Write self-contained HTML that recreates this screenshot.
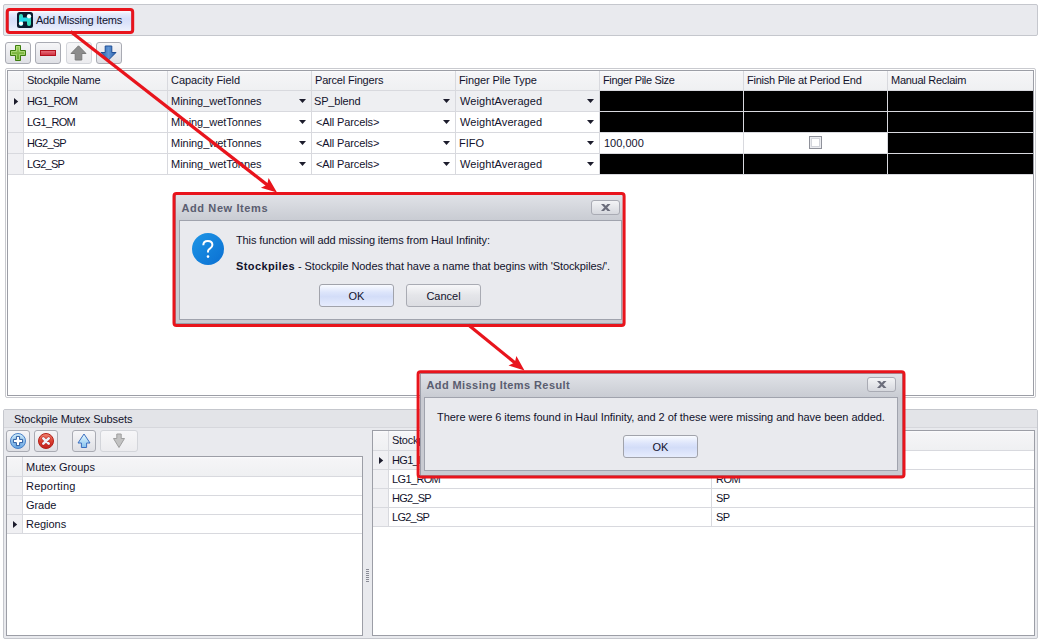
<!DOCTYPE html>
<html><head><meta charset="utf-8">
<style>
html,body{margin:0;padding:0;}
body{width:1041px;height:642px;overflow:hidden;position:relative;background:#fff;font-family:"Liberation Sans",sans-serif;font-size:11px;color:#12122c;}
div{position:absolute;box-sizing:border-box;}
.t{white-space:nowrap;line-height:12px;}
svg{position:absolute;overflow:visible;}
</style></head><body>

<div style="left:3px;top:4px;width:1035px;height:32px;border:1px solid #c5c7cd;border-radius:2px;background:#e9eaee;"></div>
<div style="left:8px;top:10px;width:124px;height:22px;border:1px solid #a6b0cf;border-radius:2px;background:linear-gradient(#fdfdff 0%,#e6ebfc 14%,#d6def9 40%,#dde4fa 65%,#eef1fd 100%);"></div>
<svg style="left:17px;top:12px" width="16" height="16" viewBox="0 0 16 16">
<rect x="0" y="0" width="16" height="16" rx="2.5" fill="#0b1a2e"/>
<defs><linearGradient id="hg" gradientUnits="userSpaceOnUse" x1="2" y1="2" x2="14" y2="14"><stop offset="0" stop-color="#3ee4a4"/><stop offset="0.4" stop-color="#22d6f0"/><stop offset="1" stop-color="#3ee4a8"/></linearGradient></defs>
<rect x="2" y="2" width="4" height="12" rx="2" fill="url(#hg)"/>
<rect x="10" y="2" width="4" height="12" rx="2" fill="url(#hg)"/>
<rect x="2" y="5.5" width="12" height="4" fill="url(#hg)"/>
<circle cx="4" cy="11.5" r="2.1" fill="#fff"/>
<circle cx="12" cy="4.3" r="2.1" fill="#fff"/>
</svg>
<div class="t" style="left:36px;top:14px;letter-spacing:-0.225px;">Add Missing Items</div>
<div style="left:5px;top:42px;width:26px;height:22px;border:1px solid #a9abb3;border-radius:3px;background:linear-gradient(#f6f6f8,#dfe0e5);"></div>
<div style="left:35px;top:42px;width:26px;height:22px;border:1px solid #a9abb3;border-radius:3px;background:linear-gradient(#f6f6f8,#dfe0e5);"></div>
<div style="left:66px;top:42px;width:26px;height:22px;border:1px solid #d3d5da;border-radius:3px;background:linear-gradient(#f6f6f8,#ececef);"></div>
<div style="left:96px;top:42px;width:26px;height:22px;border:1px solid #a9abb3;border-radius:3px;background:linear-gradient(#f6f6f8,#dfe0e5);"></div>
<svg style="left:10px;top:45px" width="16" height="16" viewBox="0 0 16 16">
<defs><linearGradient id="gp" x1="0" y1="0" x2="0" y2="1"><stop offset="0" stop-color="#a2d464"/><stop offset="1" stop-color="#5c9c22"/></linearGradient></defs>
<path d="M5.5 0.5h5v5h5v5h-5v5h-5v-5h-5v-5h5z" fill="url(#gp)" stroke="#3d7c0e" stroke-width="1"/>
<path d="M6.5 1.5h3v5h5v3h-5v5h-3v-5h-5v-3h5z" fill="none" stroke="#c8ec98" stroke-width="0.8" opacity="0.7"/>
</svg>
<svg style="left:40px;top:50px" width="16" height="6" viewBox="0 0 16 6">
<defs><linearGradient id="gm" x1="0" y1="0" x2="0" y2="1"><stop offset="0" stop-color="#ea7580"/><stop offset="1" stop-color="#cc2a3a"/></linearGradient></defs>
<rect x="0.5" y="0.5" width="15" height="5" fill="url(#gm)" stroke="#b2101c" stroke-width="1"/>
</svg>
<svg style="left:70px;top:45px" width="17" height="16" viewBox="0 0 17 16">
<path d="M8.5 0.8 L16 8.5 H11.8 V15 H5.2 V8.5 H1 Z" fill="#8c8c8c" stroke="#7a7a7a" stroke-width="1"/>
</svg>
<svg style="left:100px;top:45px" width="17" height="16" viewBox="0 0 17 16">
<defs><linearGradient id="gd" x1="0" y1="0" x2="1" y2="0"><stop offset="0" stop-color="#2a5ea8"/><stop offset="0.5" stop-color="#5f95d6"/><stop offset="1" stop-color="#2a5ea8"/></linearGradient></defs>
<path d="M5.2 1 H11.8 V7.5 H16 L8.5 15 L1 7.5 H5.2 Z" fill="url(#gd)" stroke="#1f4f96" stroke-width="1"/>
</svg>
<div style="left:5px;top:68px;width:1031px;height:330px;border:1px solid #c9cacf;border-radius:2px;background:#fff;"></div>
<div style="left:7px;top:70px;width:1027px;height:326px;border:1px solid #9c9ea6;background:#fff;"></div>
<div style="left:8px;top:71px;width:1025px;height:19px;background:linear-gradient(#fcfcfd 0px,#f5f5f7 2px,#eff0f2 19px);"></div>
<div style="left:8px;top:90px;width:1025px;height:1px;background:#d8d9de;"></div>
<div style="left:8px;top:91px;width:15px;height:84px;background:#f0f0f3;"></div>
<div style="left:24px;top:91px;width:1009px;height:20px;background:#eeeff2;"></div>
<div style="left:8px;top:111px;width:1025px;height:1px;background:#d8d9de;"></div>
<div style="left:8px;top:132px;width:1025px;height:1px;background:#d8d9de;"></div>
<div style="left:8px;top:153px;width:1025px;height:1px;background:#d8d9de;"></div>
<div style="left:8px;top:174px;width:1025px;height:1px;background:#d8d9de;"></div>
<div style="left:23px;top:71px;width:1px;height:104px;background:#d8d9de;"></div>
<div style="left:167px;top:71px;width:1px;height:104px;background:#d8d9de;"></div>
<div style="left:311px;top:71px;width:1px;height:104px;background:#d8d9de;"></div>
<div style="left:455px;top:71px;width:1px;height:104px;background:#d8d9de;"></div>
<div style="left:599px;top:71px;width:1px;height:104px;background:#d8d9de;"></div>
<div style="left:743px;top:71px;width:1px;height:104px;background:#d8d9de;"></div>
<div style="left:887px;top:71px;width:1px;height:104px;background:#d8d9de;"></div>
<div style="left:600px;top:91px;width:143px;height:20px;background:#000;"></div>
<div style="left:744px;top:91px;width:143px;height:20px;background:#000;"></div>
<div style="left:888px;top:91px;width:145px;height:20px;background:#000;"></div>
<div style="left:600px;top:112px;width:143px;height:20px;background:#000;"></div>
<div style="left:744px;top:112px;width:143px;height:20px;background:#000;"></div>
<div style="left:888px;top:112px;width:145px;height:20px;background:#000;"></div>
<div style="left:888px;top:133px;width:145px;height:20px;background:#000;"></div>
<div style="left:600px;top:154px;width:143px;height:20px;background:#000;"></div>
<div style="left:744px;top:154px;width:143px;height:20px;background:#000;"></div>
<div style="left:888px;top:154px;width:145px;height:20px;background:#000;"></div>
<div class="t" style="left:27px;top:74px;letter-spacing:-0.262px;">Stockpile Name</div>
<div class="t" style="left:171px;top:74px;letter-spacing:-0.046px;">Capacity Field</div>
<div class="t" style="left:315px;top:74px;letter-spacing:-0.192px;">Parcel Fingers</div>
<div class="t" style="left:459px;top:74px;letter-spacing:-0.1px;">Finger Pile Type</div>
<div class="t" style="left:603px;top:74px;letter-spacing:-0.35px;">Finger Pile Size</div>
<div class="t" style="left:747px;top:74px;letter-spacing:-0.233px;">Finish Pile at Period End</div>
<div class="t" style="left:891px;top:74px;letter-spacing:-0.262px;">Manual Reclaim</div>
<div class="t" style="left:27px;top:95px;letter-spacing:-0.583px;">HG1_ROM</div>
<div class="t" style="left:171px;top:95px;letter-spacing:-0.033px;">Mining_wetTonnes</div>
<div class="t" style="left:314px;top:95px;letter-spacing:-0.171px;">SP_blend</div>
<div class="t" style="left:460px;top:95px;letter-spacing:0.092px;">WeightAveraged</div>
<svg style="left:299px;top:99px" width="7" height="4" viewBox="0 0 7 4"><path d="M0 0H7L3.5 4Z" fill="#1c1c2c"/></svg>
<svg style="left:443px;top:99px" width="7" height="4" viewBox="0 0 7 4"><path d="M0 0H7L3.5 4Z" fill="#1c1c2c"/></svg>
<svg style="left:587px;top:99px" width="7" height="4" viewBox="0 0 7 4"><path d="M0 0H7L3.5 4Z" fill="#1c1c2c"/></svg>
<div class="t" style="left:27px;top:116px;letter-spacing:-0.633px;">LG1_ROM</div>
<div class="t" style="left:171px;top:116px;letter-spacing:-0.033px;">Mining_wetTonnes</div>
<div class="t" style="left:316px;top:116px;letter-spacing:-0.125px;">&lt;All Parcels&gt;</div>
<div class="t" style="left:460px;top:116px;letter-spacing:0.092px;">WeightAveraged</div>
<svg style="left:299px;top:120px" width="7" height="4" viewBox="0 0 7 4"><path d="M0 0H7L3.5 4Z" fill="#1c1c2c"/></svg>
<svg style="left:443px;top:120px" width="7" height="4" viewBox="0 0 7 4"><path d="M0 0H7L3.5 4Z" fill="#1c1c2c"/></svg>
<svg style="left:587px;top:120px" width="7" height="4" viewBox="0 0 7 4"><path d="M0 0H7L3.5 4Z" fill="#1c1c2c"/></svg>
<div class="t" style="left:27px;top:137px;letter-spacing:-0.74px;">HG2_SP</div>
<div class="t" style="left:171px;top:137px;letter-spacing:-0.033px;">Mining_wetTonnes</div>
<div class="t" style="left:316px;top:137px;letter-spacing:-0.125px;">&lt;All Parcels&gt;</div>
<div class="t" style="left:459px;top:137px;letter-spacing:0.0px;">FIFO</div>
<svg style="left:299px;top:141px" width="7" height="4" viewBox="0 0 7 4"><path d="M0 0H7L3.5 4Z" fill="#1c1c2c"/></svg>
<svg style="left:443px;top:141px" width="7" height="4" viewBox="0 0 7 4"><path d="M0 0H7L3.5 4Z" fill="#1c1c2c"/></svg>
<svg style="left:587px;top:141px" width="7" height="4" viewBox="0 0 7 4"><path d="M0 0H7L3.5 4Z" fill="#1c1c2c"/></svg>
<div class="t" style="left:27px;top:158px;letter-spacing:-0.74px;">LG2_SP</div>
<div class="t" style="left:171px;top:158px;letter-spacing:-0.033px;">Mining_wetTonnes</div>
<div class="t" style="left:316px;top:158px;letter-spacing:-0.125px;">&lt;All Parcels&gt;</div>
<div class="t" style="left:460px;top:158px;letter-spacing:0.092px;">WeightAveraged</div>
<svg style="left:299px;top:162px" width="7" height="4" viewBox="0 0 7 4"><path d="M0 0H7L3.5 4Z" fill="#1c1c2c"/></svg>
<svg style="left:443px;top:162px" width="7" height="4" viewBox="0 0 7 4"><path d="M0 0H7L3.5 4Z" fill="#1c1c2c"/></svg>
<svg style="left:587px;top:162px" width="7" height="4" viewBox="0 0 7 4"><path d="M0 0H7L3.5 4Z" fill="#1c1c2c"/></svg>
<div class="t" style="left:604px;top:137px;letter-spacing:0.0px;">100,000</div>
<div style="left:809px;top:136px;width:13px;height:13px;border:1px solid #8f919a;background:#eaebef;"></div>
<div style="left:811px;top:138px;width:9px;height:9px;border:1px solid #d3d5db;background:#fff;"></div>
<svg style="left:14px;top:98px" width="5" height="7" viewBox="0 0 5 7"><path d="M0 0L4.2 3.5L0 7Z" fill="#1c1c2c"/></svg>
<div style="left:3px;top:409px;width:1035px;height:230px;border:1px solid #c5c7cd;border-radius:2px;background:#e9eaee;"></div>
<div style="left:4px;top:410px;width:1033px;height:17px;background:#e3e4e8;"></div>
<div style="left:4px;top:427px;width:1033px;height:1px;background:#d6d7dc;"></div>
<div class="t" style="left:14px;top:413px;letter-spacing:-0.091px;">Stockpile Mutex Subsets</div>
<div style="left:6px;top:430px;width:24px;height:22px;border:1px solid #a9abb3;border-radius:3px;background:linear-gradient(#f6f6f8,#dfe0e5);"></div>
<div style="left:34px;top:430px;width:24px;height:22px;border:1px solid #a9abb3;border-radius:3px;background:linear-gradient(#f6f6f8,#dfe0e5);"></div>
<div style="left:72px;top:430px;width:24px;height:22px;border:1px solid #a9abb3;border-radius:3px;background:linear-gradient(#f6f6f8,#dfe0e5);"></div>
<div style="left:100px;top:430px;width:38px;height:22px;border:1px solid #d3d5da;border-radius:3px;background:linear-gradient(#f6f6f8,#ececef);"></div>
<svg style="left:10px;top:433px" width="16" height="16" viewBox="0 0 16 16">
<defs><linearGradient id="gb" x1="0" y1="0" x2="0" y2="1"><stop offset="0" stop-color="#d4f0fb"/><stop offset="1" stop-color="#62a2e2"/></linearGradient></defs>
<circle cx="8" cy="8" r="7.5" fill="url(#gb)" stroke="#4a80c8" stroke-width="1"/>
<path d="M6.4 3.4h3.2v3h3v3.2h-3v3h-3.2v-3h-3v-3.2h3z" fill="#fff" stroke="#2a5aa0" stroke-width="1"/>
</svg>
<svg style="left:38px;top:433px" width="16" height="16" viewBox="0 0 16 16">
<defs><linearGradient id="gr" x1="0" y1="0" x2="0" y2="1"><stop offset="0" stop-color="#f08878"/><stop offset="0.5" stop-color="#dc4030"/><stop offset="1" stop-color="#c02020"/></linearGradient></defs>
<circle cx="8" cy="8" r="7.5" fill="url(#gr)" stroke="#b42018" stroke-width="1"/>
<path d="M5.3 5.3L10.7 10.7M10.7 5.3L5.3 10.7" stroke="#a01010" stroke-width="4" stroke-linecap="round" opacity="0.45"/>
<path d="M5.3 5.3L10.7 10.7M10.7 5.3L5.3 10.7" stroke="#eef2fa" stroke-width="2.6" stroke-linecap="round"/>
</svg>
<svg style="left:77px;top:433px" width="14" height="16" viewBox="0 0 14 16">
<defs><linearGradient id="gu" x1="0" y1="0" x2="0" y2="1"><stop offset="0" stop-color="#eafaff"/><stop offset="1" stop-color="#84c2ee"/></linearGradient></defs>
<path d="M7 1 L13 10 H9.6 V14.5 H4.4 V10 H1 Z" fill="url(#gu)" stroke="#3a6ec0" stroke-width="1"/>
</svg>
<svg style="left:112px;top:433px" width="14" height="16" viewBox="0 0 14 16">
<path d="M4.8 1 H9.2 V5.5 H12.5 L7 14.5 L1.5 5.5 H4.8 Z" fill="#c2c2c2" stroke="#9e9e9e" stroke-width="1"/>
</svg>
<div style="left:6px;top:456px;width:357px;height:180px;border:1px solid #9c9ea6;background:#fff;"></div>
<div style="left:7px;top:457px;width:355px;height:19px;background:linear-gradient(#fcfcfd 0px,#f5f5f7 2px,#eff0f2 19px);"></div>
<div style="left:7px;top:476px;width:355px;height:1px;background:#d8d9de;"></div>
<div style="left:7px;top:477px;width:15px;height:56px;background:#f0f0f3;"></div>
<div style="left:7px;top:495px;width:355px;height:1px;background:#d8d9de;"></div>
<div style="left:7px;top:514px;width:355px;height:1px;background:#d8d9de;"></div>
<div style="left:7px;top:533px;width:355px;height:1px;background:#d8d9de;"></div>
<div style="left:22px;top:457px;width:1px;height:77px;background:#d8d9de;"></div>
<div class="t" style="left:26px;top:461px;letter-spacing:-0.018px;">Mutex Groups</div>
<div class="t" style="left:26px;top:480px;letter-spacing:0.213px;">Reporting</div>
<div class="t" style="left:26px;top:499px;letter-spacing:-0.05px;">Grade</div>
<div class="t" style="left:26px;top:518px;letter-spacing:-0.033px;">Regions</div>
<svg style="left:13.3px;top:521px" width="5" height="7" viewBox="0 0 5 7"><path d="M0 0L4.2 3.5L0 7Z" fill="#1c1c2c"/></svg>
<div style="left:366px;top:569px;width:3px;height:1px;background:#8a8c96;"></div>
<div style="left:366px;top:571px;width:3px;height:1px;background:#8a8c96;"></div>
<div style="left:366px;top:573px;width:3px;height:1px;background:#8a8c96;"></div>
<div style="left:366px;top:575px;width:3px;height:1px;background:#8a8c96;"></div>
<div style="left:366px;top:577px;width:3px;height:1px;background:#8a8c96;"></div>
<div style="left:366px;top:579px;width:3px;height:1px;background:#8a8c96;"></div>
<div style="left:366px;top:581px;width:3px;height:1px;background:#8a8c96;"></div>
<div style="left:372px;top:430px;width:663px;height:206px;border:1px solid #9c9ea6;background:#fff;"></div>
<div style="left:373px;top:431px;width:661px;height:19px;background:linear-gradient(#fcfcfd 0px,#f5f5f7 2px,#eff0f2 19px);"></div>
<div style="left:373px;top:450px;width:661px;height:1px;background:#d8d9de;"></div>
<div style="left:373px;top:451px;width:15px;height:75px;background:#f0f0f3;"></div>
<div style="left:389px;top:451px;width:322px;height:18px;background:#eeeff2;"></div>
<div style="left:373px;top:469px;width:661px;height:1px;background:#d8d9de;"></div>
<div style="left:373px;top:488px;width:661px;height:1px;background:#d8d9de;"></div>
<div style="left:373px;top:507px;width:661px;height:1px;background:#d8d9de;"></div>
<div style="left:373px;top:526px;width:661px;height:1px;background:#d8d9de;"></div>
<div style="left:388px;top:431px;width:1px;height:96px;background:#d8d9de;"></div>
<div style="left:711px;top:431px;width:1px;height:96px;background:#d8d9de;"></div>
<div class="t" style="left:392px;top:434px;letter-spacing:-0.262px;">Stockpile Name</div>
<div class="t" style="left:716px;top:434px;letter-spacing:-0.2px;">Stockpile Type</div>
<div class="t" style="left:392px;top:454px;letter-spacing:-0.583px;">HG1_ROM</div>
<div class="t" style="left:716px;top:454px;letter-spacing:-0.5px;">ROM</div>
<div class="t" style="left:392px;top:473px;letter-spacing:-0.633px;">LG1_ROM</div>
<div class="t" style="left:716px;top:473px;letter-spacing:-0.5px;">ROM</div>
<div class="t" style="left:392px;top:492px;letter-spacing:-0.74px;">HG2_SP</div>
<div class="t" style="left:716px;top:492px;letter-spacing:-0.5px;">SP</div>
<div class="t" style="left:392px;top:511px;letter-spacing:-0.74px;">LG2_SP</div>
<div class="t" style="left:716px;top:511px;letter-spacing:-0.5px;">SP</div>
<svg style="left:379px;top:457px" width="5" height="7" viewBox="0 0 5 7"><path d="M0 0L4.2 3.5L0 7Z" fill="#1c1c2c"/></svg>
<div style="left:175px;top:194px;width:450px;height:130px;border:1px solid #9a9da8;background:#c9cbd2;"></div>
<div style="left:176px;top:195px;width:448px;height:25px;background:linear-gradient(#e0e2e7,#c9ccd3);"></div>
<div style="left:179px;top:220px;width:443px;height:100px;border:1px solid #a0a3ad;background:#e9eaee;"></div>
<div class="t" style="left:181.5px;top:202px;font-weight:bold;color:#5a5d70;letter-spacing:0.6px;">Add New Items</div>
<div style="left:591px;top:200px;width:29px;height:15px;border:1px solid #a9abb4;border-radius:3px;background:linear-gradient(#f3f4f6,#d6d8de);"></div>
<svg style="left:600.75px;top:204.0px" width="9.5" height="7" viewBox="0 0 9.5 7"><path d="M0 0H3L9.5 7H6.5Z M6.5 0H9.5L3 7H0Z" fill="#6b6d7b"/></svg>
<svg style="left:192px;top:233px" width="32" height="32" viewBox="0 0 32 32">
<defs><linearGradient id="gq" x1="0" y1="0" x2="1" y2="1"><stop offset="0" stop-color="#1e96e6"/><stop offset="1" stop-color="#0a6fd2"/></linearGradient></defs>
<circle cx="16" cy="16" r="16" fill="url(#gq)"/>
<path d="M11.3 12.3 C11.3 9.6 13.3 8 15.8 8 C18.5 8 20.4 9.7 20.4 12.1 C20.4 14.6 17.5 15.4 16.3 17.2 C16 17.7 16 18.5 16 19.5" fill="none" stroke="#fff" stroke-width="2"/>
<circle cx="16" cy="23.6" r="1.3" fill="#fff"/>
</svg>
<div class="t" style="left:236px;top:234px;letter-spacing:-0.118px;">This function will add missing items from Haul Infinity:</div>
<div class="t" style="left:236px;top:260px;"><b style='letter-spacing:0.4px'>Stockpiles</b><span style='letter-spacing:-0.08px'> - Stockpile Nodes that have a name that begins with 'Stockpiles/'.</span></div>
<div style="left:319px;top:284px;width:75px;height:23px;border:1px solid #a1a3ab;border-radius:3px;background:linear-gradient(#f9fbff 0%,#dde5fb 35%,#d3ddf8 55%,#e6ecfd 100%);"></div>
<div class="t" style="left:319px;top:290px;width:75px;text-align:center;">OK</div>
<div style="left:406px;top:284px;width:75px;height:23px;border:1px solid #a9abb3;border-radius:3px;background:linear-gradient(#f7f7f9 0%,#e4e5e9 50%,#dcdde2 100%);"></div>
<div class="t" style="left:406px;top:290px;width:75px;text-align:center;">Cancel</div>
<div style="left:420px;top:373px;width:483px;height:103px;border:1px solid #9a9da8;background:#c9cbd2;"></div>
<div style="left:421px;top:374px;width:481px;height:23px;background:linear-gradient(#e0e2e7,#c9ccd3);"></div>
<div style="left:424px;top:397px;width:474px;height:74px;border:1px solid #a0a3ad;background:#e9eaee;"></div>
<div class="t" style="left:426.5px;top:379px;font-weight:bold;color:#5a5d70;letter-spacing:0.404px;">Add Missing Items Result</div>
<div style="left:867px;top:377px;width:29px;height:15px;border:1px solid #a9abb4;border-radius:3px;background:linear-gradient(#f3f4f6,#d6d8de);"></div>
<svg style="left:876.75px;top:381.0px" width="9.5" height="7" viewBox="0 0 9.5 7"><path d="M0 0H3L9.5 7H6.5Z M6.5 0H9.5L3 7H0Z" fill="#6b6d7b"/></svg>
<div class="t" style="left:437px;top:411px;letter-spacing:-0.042px;">There were 6 items found in Haul Infinity, and 2 of these were missing and have been added.</div>
<div style="left:623px;top:435px;width:75px;height:23px;border:1px solid #a1a3ab;border-radius:3px;background:linear-gradient(#f9fbff 0%,#dde5fb 35%,#d3ddf8 55%,#e6ecfd 100%);"></div>
<div class="t" style="left:623px;top:441px;width:75px;text-align:center;">OK</div>
<svg style="left:0;top:0" width="1041" height="642" viewBox="0 0 1041 642"><rect x="7.2" y="9.4" width="125.5" height="23.1" rx="2.5" fill="none" stroke="#e8141c" stroke-width="3.0"/></svg>
<svg style="left:0;top:0" width="1041" height="642" viewBox="0 0 1041 642"><rect x="174.0" y="193.4" width="450.1" height="132.1" rx="2.5" fill="none" stroke="#e8141c" stroke-width="3.0"/></svg>
<svg style="left:0;top:0" width="1041" height="642" viewBox="0 0 1041 642"><rect x="418.1" y="371.7" width="485.9" height="105.30000000000001" rx="2.5" fill="none" stroke="#e8141c" stroke-width="3.0"/></svg>
<svg style="left:0;top:0" width="1041" height="642" viewBox="0 0 1041 642"><line x1="70.5" y1="31.5" x2="267.54" y2="185.12" stroke="#e8141c" stroke-width="3.2"/><path d="M277,192.5 L260.96,187.86 L267.14,184.81 L268.59,178.08 Z" fill="#e8141c"/></svg>
<svg style="left:0;top:0" width="1041" height="642" viewBox="0 0 1041 642"><line x1="468.5" y1="325" x2="515.19" y2="362.93" stroke="#e8141c" stroke-width="3.2"/><path d="M524.5,370.5 L508.56,365.54 L514.80,362.62 L516.38,355.91 Z" fill="#e8141c"/></svg>
</body></html>
